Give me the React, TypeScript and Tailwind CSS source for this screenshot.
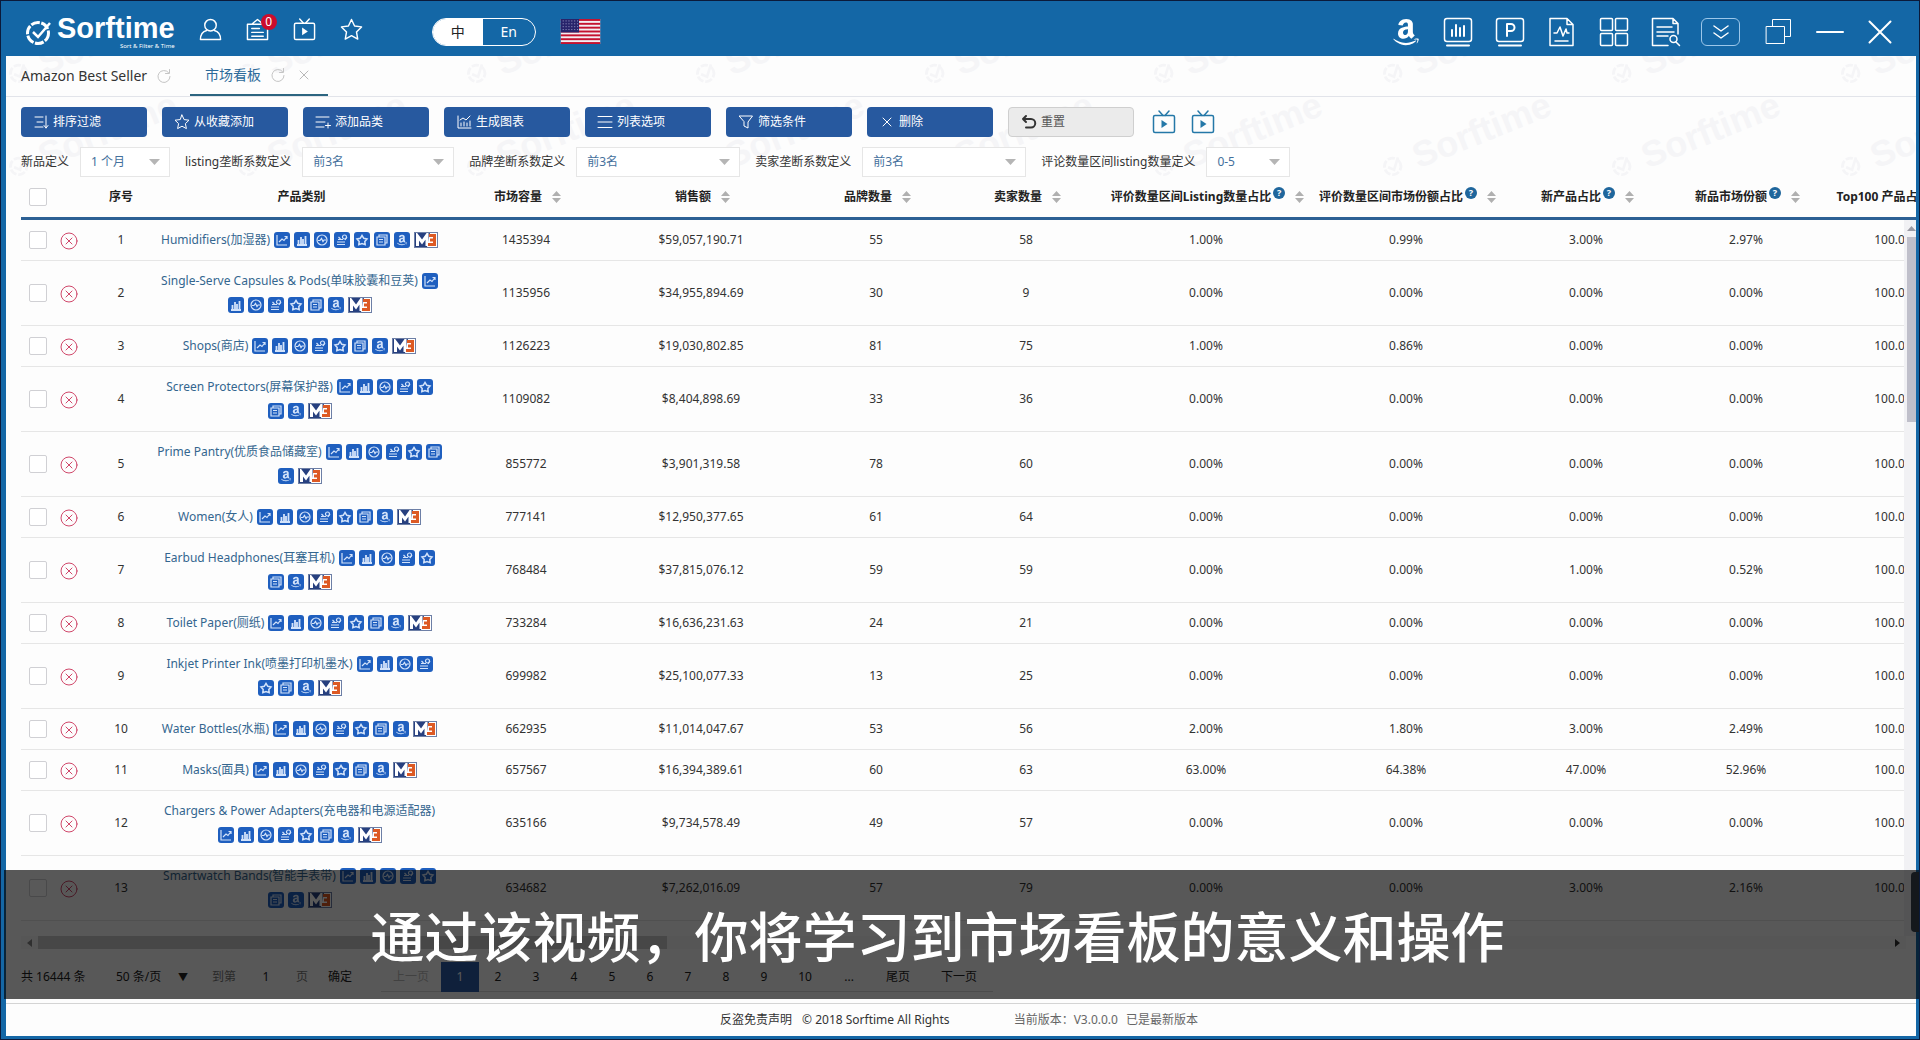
import type { ReactNode } from "react";
import { FaAmazon } from "react-icons/fa";

interface IconProps {
  className?: string;
}

interface Row {
  name: string;
  // how many of the tool icons stay on the first line
  first: number;
  values: string[];
}

const rows: Row[] = [
  { name: "Humidifiers(加湿器)", first: 8, values: ["1435394", "$59,057,190.71", "55", "58", "1.00%", "0.99%", "3.00%", "2.97%"] },
  { name: "Single-Serve Capsules & Pods(单味胶囊和豆荚)", first: 1, values: ["1135956", "$34,955,894.69", "30", "9", "0.00%", "0.00%", "0.00%", "0.00%"] },
  { name: "Shops(商店)", first: 8, values: ["1126223", "$19,030,802.85", "81", "75", "1.00%", "0.86%", "0.00%", "0.00%"] },
  { name: "Screen Protectors(屏幕保护器)", first: 5, values: ["1109082", "$8,404,898.69", "33", "36", "0.00%", "0.00%", "0.00%", "0.00%"] },
  { name: "Prime Pantry(优质食品储藏室)", first: 6, values: ["855772", "$3,901,319.58", "78", "60", "0.00%", "0.00%", "0.00%", "0.00%"] },
  { name: "Women(女人)", first: 8, values: ["777141", "$12,950,377.65", "61", "64", "0.00%", "0.00%", "0.00%", "0.00%"] },
  { name: "Earbud Headphones(耳塞耳机)", first: 5, values: ["768484", "$37,815,076.12", "59", "59", "0.00%", "0.00%", "1.00%", "0.52%"] },
  { name: "Toilet Paper(厕纸)", first: 8, values: ["733284", "$16,636,231.63", "24", "21", "0.00%", "0.00%", "0.00%", "0.00%"] },
  { name: "Inkjet Printer Ink(喷墨打印机墨水)", first: 4, values: ["699982", "$25,100,077.33", "13", "25", "0.00%", "0.00%", "0.00%", "0.00%"] },
  { name: "Water Bottles(水瓶)", first: 8, values: ["662935", "$11,014,047.67", "53", "56", "2.00%", "1.80%", "3.00%", "2.49%"] },
  { name: "Masks(面具)", first: 8, values: ["657567", "$16,394,389.61", "60", "63", "63.00%", "64.38%", "47.00%", "52.96%"] },
  { name: "Chargers & Power Adapters(充电器和电源适配器)", first: 0, values: ["635166", "$9,734,578.49", "49", "57", "0.00%", "0.00%", "0.00%", "0.00%"] },
  { name: "Smartwatch Bands(智能手表带)", first: 5, values: ["634682", "$7,262,016.09", "57", "79", "0.00%", "0.00%", "3.00%", "2.16%"] },
];

const columns = [
  { title: "市场容量", help: false },
  { title: "销售额", help: false },
  { title: "品牌数量", help: false },
  { title: "卖家数量", help: false },
  { title: "评价数量区间Listing数量占比", help: true },
  { title: "评价数量区间市场份额占比", help: true },
  { title: "新产品占比", help: true },
  { title: "新品市场份额", help: true },
  { title: "Top100 产品占比", help: true },
];

const filters = [
  { id: "new", label: "新品定义", value: "1 个月", width: "w-[90px]" },
  { id: "listing", label: "listing垄断系数定义", value: "前3名", width: "w-[152px]" },
  { id: "brand", label: "品牌垄断系数定义", value: "前3名", width: "w-[164px]" },
  { id: "seller", label: "卖家垄断系数定义", value: "前3名", width: "w-[164px]" },
  { id: "review", label: "评论数量区间listing数量定义", value: "0-5", width: "w-[84px]" },
];

const Line = ({ className, box = 24, width = 1.5, children }: IconProps & { box?: number; width?: number; children: ReactNode }) => (
  <svg className={className} viewBox={`0 0 ${box} ${box}`} fill="none" stroke="currentColor" strokeWidth={width} strokeLinejoin="round" strokeLinecap="round">
    {children}
  </svg>
);

const TvIcon = ({ className }: IconProps) => (
  <Line className={className}>
    <rect x="1.5" y="5.5" width="21" height="17" rx="1.5" />
    <path d="M7 1l4 4.500M17 1l-4 4.500" />
    <path d="M9.500 10v8l6-4z" fill="currentColor" stroke="none" />
  </Line>
);

const StarIcon = ({ className }: IconProps) => (
  <Line className={className}>
    <path d="M12 1.500l3.200 6.800 7.300 1-5.300 5.200 1.300 7.500L12 18.500 5.500 22l1.300-7.500L1.500 9.300l7.300-1z" />
  </Line>
);

const RefreshIcon = ({ className }: IconProps) => (
  <Line className={className} box={14} width={1}>
    <path d="M11.500 3.500A6 6 0 1 0 13 7.500" />
    <path d="M12.500 .5v4h-4" />
  </Line>
);

const CloseIcon = ({ className }: IconProps) => (
  <Line className={className} box={12} width={1}>
    <path d="M2 2l8 8M10 2l-8 8" />
  </Line>
);

const Logo = () => (
  <div className="flex items-center gap-1">
    <svg className="h-7 w-7" viewBox="0 0 28 28" fill="none" stroke="#fff">
      <circle cx="13" cy="15" r="10.500" strokeWidth="3" strokeDasharray="9 1.500" />
      <path d="M8 14l5 5L25 5" strokeWidth="2.500" />
    </svg>
    <div className="flex flex-col items-end">
      <span className="font-['Liberation_Sans',sans-serif] text-[29px] leading-7 font-bold">Sorftime</span>
      <span className="text-[6px] leading-2 whitespace-nowrap">Sort &amp; Filter &amp; Time</span>
    </div>
  </div>
);

const Flag = () => (
  <svg className="h-[25px] w-[41px]" viewBox="0 0 41 26" role="img" aria-label="US">
    <rect width="41" height="26" fill="#f3eef2" />
    {[0, 4, 8, 12, 16, 20, 24].map((y) => (
      <rect key={y} y={y} width="41" height="2" fill="#c4122f" />
    ))}
    <rect width="19" height="14" fill="#27246b" />
    {[2, 5, 8, 11].map((y) => (
      <path key={y} d={`M2 ${y}h16`} stroke="#a9a8cf" strokeDasharray="1 2" />
    ))}
  </svg>
);

const sortIcon = (
  <svg className="h-3 w-[9px] text-[#b0b0b0]" viewBox="0 0 9 12" fill="currentColor">
    <path d="M4.500 0L9 5H0zM4.500 12L9 7H0z" />
  </svg>
);

const toolIcons: ReactNode[] = [
  <path d="M3 3v10h10M5 10l3-3 2 1.500 3-4M10.500 4.500H13V7" />,
  <path d="M3 13h10M4.500 12V8M7 12V5M9 12V7M11.500 12V4" strokeWidth="1.800" />,
  <>
    <circle cx="8" cy="8" r="5" />
    <path d="M4 8.500h2l1.500-2 1.500 3 1-1.500h2" />
  </>,
  <>
    <path d="M3 12.500h8M3 10h8M4 7.500h5M4.500 5l2 2M11 8l2-3" />
    <circle cx="10.500" cy="5" r="2" />
  </>,
  <path d="M8 3.500l1.800 2.800 3.200.7-2.200 2.500.4 3.200L8 11.500l-3.200 1.200.4-3.200L3 7l3.200-.7z" strokeWidth="1.500" />,
  <path d="M3 5h8v8H3zM5 5V3h8v8h-2M5 7.500h4M5 10h4" />,
];

const ToolIcon = ({ index }: { index: number }) => {
  if (index === 7) {
    return (
      <button aria-label="M3" className="flex h-4 w-6 overflow-hidden border border-[#6d7fa6] bg-white">
        <svg className="h-full w-full" viewBox="0 0 22 14">
          <path d="M0 0h15l-3 14H0z" fill="#27407f" />
          <path d="M2.500 13V3L7 9l5-7v11" fill="none" stroke="#fff" strokeWidth="3" />
          <path d="M14 2.500h5.500v9H13M15 7h4" fill="none" stroke="#dd5a24" strokeWidth="3" />
        </svg>
      </button>
    );
  }
  return (
    <button aria-label={`tool ${index + 1}`} className="flex h-4 w-4 items-center justify-center rounded-[3px] bg-[#1f5fbf] text-[#d3e3fa]">
      {index === 6 ? (
        <FaAmazon className="h-3 w-3" />
      ) : (
        <svg className="h-4 w-4" viewBox="0 0 16 16" fill="none" stroke="currentColor" strokeWidth="1.200">
          {toolIcons[index]}
        </svg>
      )}
    </button>
  );
};

const Category = ({ name, first }: { name: string; first: number }) => {
  const all = [0, 1, 2, 3, 4, 5, 6, 7];
  return (
    <div className="flex flex-col items-center">
      <div className="flex h-6 items-center gap-1 whitespace-nowrap">
        <a href="#" className="text-[#34668f]">{name}</a>
        {all.slice(0, first).map((i) => <ToolIcon key={i} index={i} />)}
      </div>
      {first < 8 && (
        <div className="flex h-6 items-center gap-1">
          {all.slice(first).map((i) => <ToolIcon key={i} index={i} />)}
        </div>
      )}
    </div>
  );
};

const Checkbox = ({ label }: { label: string }) => (
  <input type="checkbox" aria-label={label} className="block h-[18px] w-[18px] appearance-none rounded-[2px] border border-[#d0d0d4] bg-white" />
);

const actions = [
  { label: "排序过滤", icon: <path d="M2 3h8M4 8h6M2 13h8M13 2v12M11 11.500l2 2.500 2-2.500" /> },
  { label: "从收藏添加", icon: <path d="M8 1l2.100 4.600 4.900.6-3.600 3.400 1 5L8 12.200 3.600 14.600l1-5L1 6.200l4.900-.6z" /> },
  { label: "添加品类", icon: <path d="M1 3h13M1 8h9M1 13h8M13 9v5M10.500 11.500h5" /> },
  { label: "生成图表", icon: <path d="M2 2v12h13M5 12V9M8 12V8M11 12V9M14 12V7M4 6l3-2 3 2 4-4" /> },
  { label: "列表选项", icon: <path d="M1 2.500h14M1 8h14M1 13.500h14" /> },
  { label: "筛选条件", icon: <path d="M1.500 2h13L10 8v6l-4-2V8z" /> },
  { label: "删除", icon: <path d="M4 4l8 8M12 4l-8 8" /> },
];

const Toolbar = () => (
  <div className="flex items-center gap-[15px]">
    {actions.map((a) => (
      <button key={a.label} className="flex h-[30px] w-[126px] items-center gap-1 rounded-[4px] bg-[#27599f] pl-3 text-white">
        <Line className="h-4 w-4" box={16} width={1}>{a.icon}</Line>
        {a.label}
      </button>
    ))}
    <button className="flex h-[30px] w-[126px] items-center gap-1 rounded-[4px] border border-[#cfcfcf] bg-[#ebebeb] pl-3 text-[#555]">
      <Line className="h-4 w-4 text-[#333]" box={16} width={2}>
        <path d="M5 2L2 5l3 3M2 5h8a4 4 0 0 1 0 8.500H5" />
      </Line>
      重置
    </button>
    <div className="flex gap-[15px] pl-[3px] text-[#2478a8]">
      <button aria-label="视频教程"><TvIcon className="h-6 w-6" /></button>
      <button aria-label="操作视频"><TvIcon className="h-6 w-6" /></button>
    </div>
  </div>
);

const Filters = () => (
  <div className="flex items-center gap-[15px]">
    {filters.map((f) => (
      <div key={f.id} className="flex items-center gap-[11px]">
        <label htmlFor={f.id} className="whitespace-nowrap">{f.label}</label>
        <div className="relative">
          <select id={f.id} className={`block h-[30px] appearance-none border border-[#e6e6e6] bg-white pl-[10px] text-[#44709c] ${f.width}`}>
            <option>{f.value}</option>
          </select>
          <svg className="pointer-events-none absolute right-[10px] top-3 h-[6px] w-[11px]" viewBox="0 0 11 6" fill="#b5b5b5">
            <path d="M0 0h11L5.500 6z" />
          </svg>
        </div>
      </div>
    ))}
  </div>
);

const Watermark = () => (
  <div aria-hidden="true" className="pointer-events-none absolute inset-0 overflow-hidden text-[#f5f5f7] select-none">
    {[0, 1].map((line) => (
      <div key={line} className="flex h-[93px] gap-[49px] pl-[10px]">
        {[0, 1, 2, 3, 4, 5, 6, 7, 8].map((i) => (
          <div key={i} className="flex h-10 w-[180px] shrink-0 origin-bottom-left -rotate-[22deg] items-center gap-3">
            <svg className="h-6 w-6" viewBox="0 0 24 24" fill="none" stroke="currentColor" strokeWidth="3">
              <circle cx="12" cy="12" r="9" strokeDasharray="8 2" />
              <path d="M7 11l5 5 9-11" />
            </svg>
            <span className="font-['Liberation_Sans',sans-serif] text-[36px] font-bold">Sorftime</span>
          </div>
        ))}
      </div>
    ))}
  </div>
);

const TopBar = () => (
  <header className="flex h-[55px] items-center justify-between bg-[#1467a6] pt-[6px] pr-[27px] pl-6 text-white">
    <div className="flex items-center">
      <Logo />
      <div className="ml-6 flex items-center gap-6 pb-1">
        <button aria-label="账户">
          <Line className="h-[23px] w-[23px]">
            <circle cx="12" cy="7.500" r="6" />
            <path d="M8 13c-4 1-6.500 4-6.500 9.500h21C22.500 17 20 14 16 13" />
          </Line>
        </button>
        <button aria-label="消息" className="relative">
          <Line className="h-[23px] w-[23px]">
            <path d="M1.500 6.500h21v16h-21zM6 6.500l6-5 6 5M6 11h8M6 15h12M6 19h12" />
          </Line>
          <span className="absolute -top-1 -right-2 h-4 w-4 rounded-full bg-[#cc0c2c] text-center text-[12px] leading-4">0</span>
        </button>
        <button aria-label="视频"><TvIcon className="h-[23px] w-[23px]" /></button>
        <button aria-label="收藏"><StarIcon className="h-[23px] w-[23px]" /></button>
      </div>
      <div className="ml-[69px] flex h-7 w-[104px] overflow-hidden rounded-full border border-white text-[14px]">
        <button className="w-[50px] bg-white text-[#222]">中</button>
        <button className="flex-1">En</button>
      </div>
      <div className="ml-6"><Flag /></div>
    </div>
    <div className="flex items-center">
      <button aria-label="Amazon"><FaAmazon className="mr-[22px] h-[30px] w-[30px]" /></button>
      <div className="mr-5 flex items-center gap-[22px]">
        <button aria-label="图表">
          <Line className="h-[30px] w-[30px]" box={30}>
            <rect x="1.500" y="1.500" width="27" height="23" rx="2.500" />
            <path d="M4 28.500h22M9 19v-6M13 19V8M17 19v-8M21 19V9" strokeWidth="2" />
          </Line>
        </button>
        <button aria-label="产品">
          <Line className="h-[30px] w-[30px]" box={30}>
            <rect x="1.500" y="1.500" width="27" height="23" rx="2.500" />
            <path d="M4 28.500h22" strokeWidth="2" />
            <path d="M12 19V7h4a3.500 3.500 0 0 1 0 7h-4" strokeWidth="2" />
          </Line>
        </button>
        <button aria-label="监控">
          <Line className="h-[30px] w-[30px]" box={30}>
            <path d="M3 1.500h17l6 6v21H3zM20 1.500v6h6M7 16h3l3-6 3 9 3-7 1 4h2M8 24h13" />
          </Line>
        </button>
        <button aria-label="应用">
          <Line className="h-[30px] w-[30px]" box={30}>
            <rect x="1.500" y="1.500" width="12" height="12" rx="1" />
            <rect x="16.500" y="1.500" width="12" height="12" rx="1" />
            <rect x="1.500" y="16.500" width="12" height="12" rx="1" />
            <rect x="16.500" y="16.500" width="12" height="12" rx="1" />
          </Line>
        </button>
        <button aria-label="报告查询">
          <Line className="h-[30px] w-[30px]" box={30}>
            <path d="M17 28.500H1.500v-27H22l5 5V17M22 1.500v5h5M6 10h15M6 15h17M6 19h11" />
            <circle cx="22.500" cy="22" r="3.500" />
            <path d="M25 25l3.500 3.500" />
          </Line>
        </button>
      </div>
      <button aria-label="展开" className="mr-[25px] flex h-7 w-[39px] items-center justify-center rounded-[6px] border border-[#9cc7ea]">
        <Line className="h-4 w-4" box={16}><path d="M1 2l7 5 7-5M1 9l7 5 7-5" /></Line>
      </button>
      <button aria-label="还原" className="mr-6">
        <Line className="h-[27px] w-[27px]" box={27} width={1}>
          <path d="M1.500 8.500h18v17h-18zM7.500 8.500v-7h18v17h-6" />
        </Line>
      </button>
      <button aria-label="最小化" className="mr-6">
        <Line className="h-7 w-7" box={28} width={2}><path d="M1 14h26" /></Line>
      </button>
      <button aria-label="关闭">
        <Line className="h-6 w-6" width={2}><path d="M1.500 1.500l21 21M22.500 1.500l-21 21" /></Line>
      </button>
    </div>
  </header>
);

const DataTable = () => (
  <div className="relative min-h-0 flex-1 overflow-hidden">
    <table className="w-[1958px] table-fixed border-separate border-spacing-0 text-center">
      <colgroup>
        <col className="w-[34px]" />
        <col className="w-[31px]" />
        <col className="w-[70px]" />
        <col className="w-[291px]" />
        <col className="w-[158px]" />
        <col className="w-[192px]" />
        <col className="w-[158px]" />
        <col className="w-[142px]" />
        <col className="w-[218px]" />
        <col className="w-[182px]" />
        <col className="w-[178px]" />
        <col className="w-[142px]" />
        <col className="w-[162px]" />
      </colgroup>
      <thead>
        <tr className="h-[43px] text-[#222] [&>th]:border-b-3 [&>th]:border-[#2c6094]">
          <th className="pl-2"><Checkbox label="全选" /></th>
          <th />
          <th>序号</th>
          <th>产品类别</th>
          {columns.map((c) => (
            <th key={c.title}>
              <div className="flex items-center justify-center pl-[3px] whitespace-nowrap">
                {c.title}
                {c.help && (
                  <span className="mb-2 ml-[2px] h-3 w-3 rounded-full bg-[#1f669c] text-[9px] leading-3 text-white">?</span>
                )}
                <button aria-label="排序" className="ml-[10px]">{sortIcon}</button>
              </div>
            </th>
          ))}
        </tr>
      </thead>
      <tbody>
        {rows.map((row, i) => (
          <tr key={row.name} className="[&>td]:border-b [&>td]:border-[#e6e6e6] [&>td]:py-2">
            <td className="pl-2"><Checkbox label={row.name} /></td>
            <td className="pl-[5px]">
              <button aria-label="移除" className="mt-[2px] block text-[#d0476a]">
                <Line className="h-[18px] w-[18px]" box={18} width={1}>
                  <circle cx="9" cy="9" r="8" />
                  <path d="M6 6l6 6M12 6l-6 6" />
                </Line>
              </button>
            </td>
            <td>{i + 1}</td>
            <td className="pr-1"><Category name={row.name} first={row.first} /></td>
            {row.values.map((v, j) => <td key={j}>{v}</td>)}
            <td>100.00%</td>
          </tr>
        ))}
      </tbody>
    </table>
    {/* vertical scrollbar over the clipped last column */}
    <div className="absolute top-[43px] right-0 bottom-0 flex w-3 flex-col items-end bg-[#f1f1f4]">
      <svg className="my-[6px] h-[5px] w-[9px]" viewBox="0 0 9 5" fill="#9a9aa4"><path d="M0 5h9L4.500 0z" /></svg>
      <div className="h-[185px] w-[9px] bg-[#bfbfca]" />
    </div>
  </div>
);

const Pagination = () => (
  <nav className="flex h-[30px] items-center pl-[15px] text-[#222]">
    <span className="w-[95px]">共 16444 条</span>
    <div className="relative w-[96px]">
      <select aria-label="每页条数" className="block w-[76px] appearance-none">
        <option>50 条/页</option>
      </select>
      <span className="pointer-events-none absolute top-0 right-6 text-[10px]">▼</span>
    </div>
    <label htmlFor="page" className="text-[#777]">到第</label>
    <input id="page" defaultValue="1" className="w-[60px] text-center" />
    <span className="text-[#777]">页</span>
    <button className="ml-4 w-[32px]">确定</button>
    <div className="ml-[25px] flex h-full items-center border-b border-[#d8d8d8]">
      <button className="w-[60px] text-[#bbb]">上一页</button>
      <button className="h-[30px] w-[38px] bg-[#2b5da8] text-white">1</button>
      {[2, 3, 4, 5, 6, 7, 8, 9].map((n) => (
        <button key={n} className="w-[38px]">{n}</button>
      ))}
      <button className="w-[44px]">10</button>
      <span className="w-[44px] text-center">...</span>
      <button className="w-[54px]">尾页</button>
      <button className="w-[68px]">下一页</button>
    </div>
  </nav>
);

export default function App() {
  return (
    <div className="relative flex h-screen min-w-[1280px] flex-col overflow-hidden border border-[#0b1a3a] bg-[#1467a6] font-['Noto_Sans','Noto_Sans_CJK_SC',sans-serif] text-[12px] leading-4 text-[#333]">
      <TopBar />
      <div className="mr-[3px] mb-[3px] ml-[5px] flex min-h-0 flex-1 flex-col bg-[#fdfdfd]">
        <div className="relative">
          <Watermark />
          <div className="relative flex h-[41px] items-end border-b border-[#e2e4ea] text-[14px]">
            <div className="flex h-10 w-[184px] items-center gap-[10px] pl-[15px]">
              <a href="#" className="whitespace-nowrap text-[#333]">Amazon Best Seller</a>
              <button aria-label="刷新" className="text-[#c4c4c4]"><RefreshIcon className="h-[14px] w-[14px]" /></button>
            </div>
            <div className="flex h-10 w-[138px] items-center border-b-2 border-[#2c6580] pl-[15px]">
              <a href="#" className="text-[#2c6a9a]">市场看板</a>
              <button aria-label="刷新" className="ml-[10px] text-[#c4c4c4]"><RefreshIcon className="h-[14px] w-[14px]" /></button>
              <button aria-label="关闭标签" className="ml-[13px] text-[#b8b8b8]"><CloseIcon className="h-3 w-3" /></button>
            </div>
          </div>
          <div className="relative flex flex-col gap-[10px] pt-[10px] pl-[15px]">
            <Toolbar />
            <Filters />
          </div>
        </div>
        <div className="flex min-h-0 flex-1 flex-col pl-[15px]">
          <DataTable />
        </div>
        <div className="mr-[10px] ml-[15px] flex h-[13px] items-center gap-[6px] bg-[#f7f7f7] px-[6px]">
          <svg className="h-2 w-[5px]" viewBox="0 0 5 8" fill="#888"><path d="M5 0v8L0 4z" /></svg>
          <div className="flex h-full flex-1"><div className="w-[34%] bg-[#cbcbcb]" /></div>
          <svg className="h-2 w-[5px]" viewBox="0 0 5 8" fill="#333"><path d="M0 0v8l5-4z" /></svg>
        </div>
        <div className="pt-[13px] pb-[11px]"><Pagination /></div>
        <footer className="flex h-[33px] items-center justify-center border-t border-[#d4d4d4] pr-1">
          <a href="#">反盗免责声明</a>
          <span className="ml-[10px]">© 2018 Sorftime All Rights</span>
          <span className="ml-16 text-[#666]">当前版本：V3.0.0.0</span>
          <span className="ml-2 text-[#666]">已是最新版本</span>
        </footer>
      </div>
      <div className="absolute right-0 bottom-10 left-[3px] flex h-[129px] items-center justify-center bg-black/65 pr-12">
        <p className="font-['Noto_Sans_CJK_SC',sans-serif] text-[54px] leading-[54px] font-medium whitespace-nowrap text-white">
          通过该视频，你将学习到市场看板的意义和操作
        </p>
        <div className="absolute top-[2px] right-0 h-[60px] w-2 rounded-l bg-[#14181c]" />
      </div>
    </div>
  );
}
